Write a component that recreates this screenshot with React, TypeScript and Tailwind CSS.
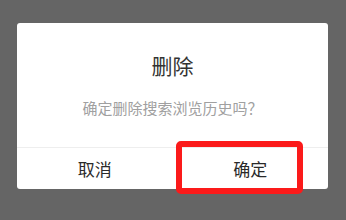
export default function App() {
  return (
    <div className="w-[346px] h-[220px] bg-[#656565] pt-[23px] px-[17px] font-['Noto_Sans_CJK_SC',sans-serif]">
      <div className="relative h-[166px] w-[311px] rounded-[3px] bg-white flex flex-col">
        <div className="h-[124px] flex flex-col items-center">
          <div className="mt-[29px] text-[21px] leading-[26px] text-[#333]">删除</div>
          <div className="mt-[20px] text-[15px] leading-[20px] text-[#a0a0a0]">确定删除搜索浏览历史吗？</div>
        </div>
        <div className="h-px bg-[#eeeeee]" />
        <div className="flex flex-1">
          <button className="flex-1 flex items-center justify-center text-[17px] text-[#2a2a2a]">取消</button>
          <button className="flex-1 flex items-center justify-center text-[17px] text-[#2a2a2a]">确定</button>
        </div>
        <div className="absolute left-[159px] top-[118px] w-[127px] h-[53px] rounded-[5px] border-[6px] border-[#fb1a1a]" />
      </div>
    </div>
  );
}
